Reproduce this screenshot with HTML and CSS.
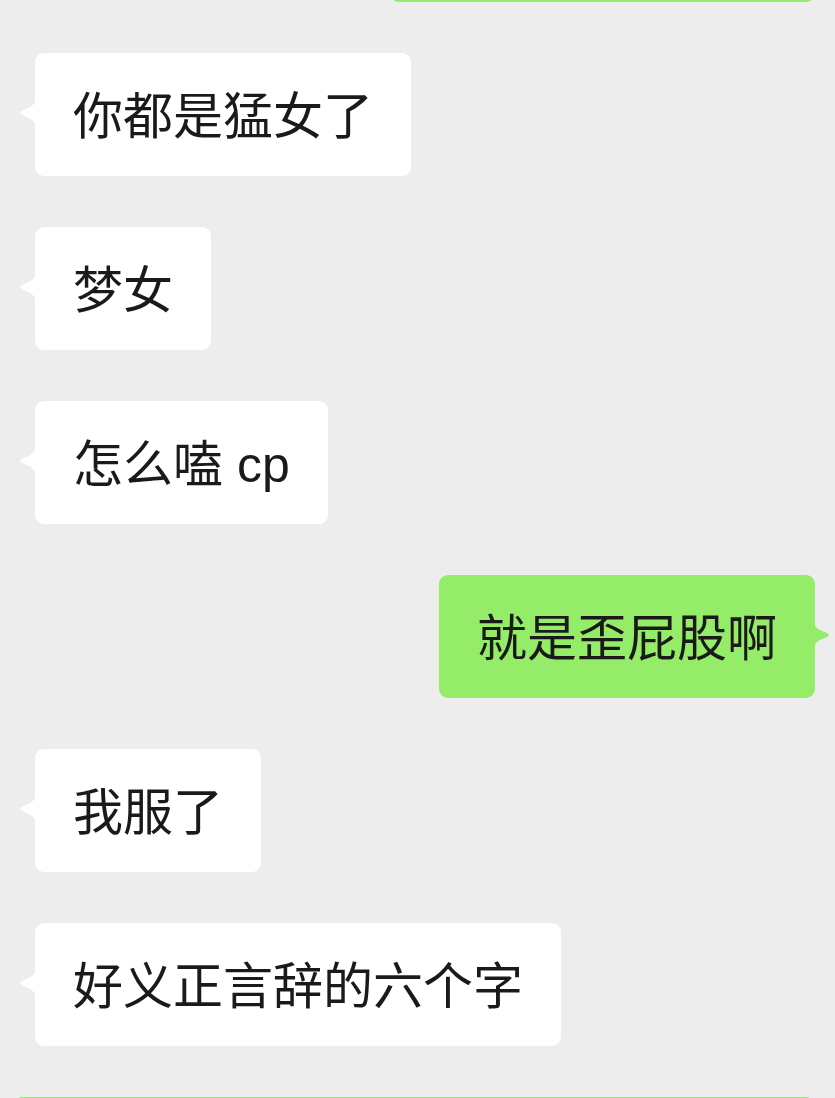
FILE: index.html
```html
<!DOCTYPE html>
<html lang="zh-CN">
<head>
<meta charset="utf-8">
<title>聊天</title>
<link rel="stylesheet" href="styles.css">
</head>
<body>
<div class="chat">
  <div class="row right top-cut">
    <div class="bubble green wide-top"><svg class="tail tail-r" viewBox="0 0 17 34"><path d="M0 0 C0 5 2 8 5 11 L14.5 15.3 C16.3 16.2 16.3 17.8 14.5 18.7 L5 23 C2 26 0 29 0 34 Z"/></svg></div>
  </div>
  <div class="row left">
    <div class="bubble white"><svg class="tail tail-l" viewBox="0 0 17 34"><path d="M17 0 C17 5 15 8 12 11 L2.5 15.3 C0.7 16.2 0.7 17.8 2.5 18.7 L12 23 C15 26 17 29 17 34 Z"/></svg>你都是猛女了</div>
  </div>
  <div class="row left">
    <div class="bubble white"><svg class="tail tail-l" viewBox="0 0 17 34"><path d="M17 0 C17 5 15 8 12 11 L2.5 15.3 C0.7 16.2 0.7 17.8 2.5 18.7 L12 23 C15 26 17 29 17 34 Z"/></svg>梦女</div>
  </div>
  <div class="row left">
    <div class="bubble white"><svg class="tail tail-l" viewBox="0 0 17 34"><path d="M17 0 C17 5 15 8 12 11 L2.5 15.3 C0.7 16.2 0.7 17.8 2.5 18.7 L12 23 C15 26 17 29 17 34 Z"/></svg>怎么嗑 cp</div>
  </div>
  <div class="row right">
    <div class="bubble green">就是歪屁股啊<svg class="tail tail-r" viewBox="0 0 17 34"><path d="M0 0 C0 5 2 8 5 11 L14.5 15.3 C16.3 16.2 16.3 17.8 14.5 18.7 L5 23 C2 26 0 29 0 34 Z"/></svg></div>
  </div>
  <div class="row left">
    <div class="bubble white"><svg class="tail tail-l" viewBox="0 0 17 34"><path d="M17 0 C17 5 15 8 12 11 L2.5 15.3 C0.7 16.2 0.7 17.8 2.5 18.7 L12 23 C15 26 17 29 17 34 Z"/></svg>我服了</div>
  </div>
  <div class="row left">
    <div class="bubble white"><svg class="tail tail-l" viewBox="0 0 17 34"><path d="M17 0 C17 5 15 8 12 11 L2.5 15.3 C0.7 16.2 0.7 17.8 2.5 18.7 L12 23 C15 26 17 29 17 34 Z"/></svg>好义正言辞的六个字</div>
  </div>
  <div class="bottom-card"></div>
</div>
</body>
</html>
```

FILE: styles.css
```css
html, body {
  margin: 0;
  padding: 0;
}
body {
  background: #ededed;
  width: 835px;
  height: 1098px;
  overflow: hidden;
  font-family: "Liberation Sans", "Noto Sans CJK SC", sans-serif;
}
.chat {
  display: flex;
  flex-direction: column;
  gap: 51px;
  padding: 0 20px 0 35px;
}
.row {
  display: flex;
}
.row.left {
  justify-content: flex-start;
}
.row.right {
  justify-content: flex-end;
}
.top-cut {
  margin-top: -121px;
}
.bubble {
  position: relative;
  box-sizing: border-box;
  height: 123px;
  padding: 32px 38px 26px;
  font-size: 50px;
  line-height: 65px;
  color: #1a1a1a;
  border-radius: 9px;
  white-space: nowrap;
}
.bubble.white {
  background: #ffffff;
}
.bubble.green {
  background: #95ec69;
}
.bubble.wide-top {
  width: 425px;
}
.tail {
  position: absolute;
  top: 43px;
  width: 17px;
  height: 34px;
}
.tail-l {
  left: -16px;
  fill: #ffffff;
}
.tail-r {
  right: -15px;
  fill: #95ec69;
}
.bottom-card {
  margin-left: -16px;
  width: 790px;
  height: 2px;
  border-radius: 9px 9px 0 0;
  background: #95ec69;
}
```
